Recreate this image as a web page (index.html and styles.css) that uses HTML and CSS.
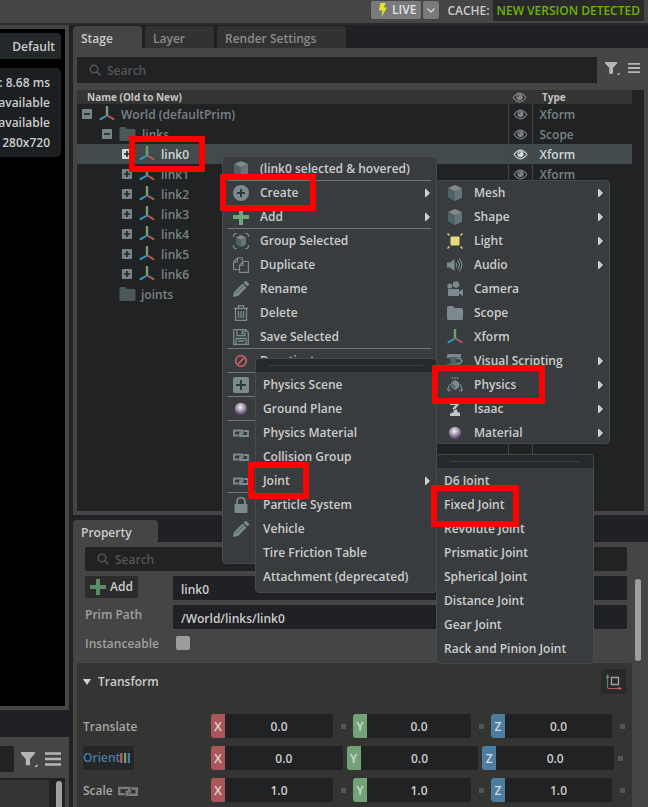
FILE: index.html
```
<!DOCTYPE html>
<html lang="en">
<head>
    <meta charset="UTF-8">
    <meta name="viewport" content="width=device-width, initial-scale=1.0">
    <title>Stage</title>
    <link rel="stylesheet" href="styles.css">
</head>
<body>
    <!-- Icon set -->
    <svg class="sprite" aria-hidden="true">
        <defs>
            <radialGradient id="ballFill" cx="45%" cy="35%" r="60%">
                <stop offset="0" stop-color="#f4f0f6"/>
                <stop offset="0.45" stop-color="#b3a8b8"/>
                <stop offset="1" stop-color="#59406e"/>
            </radialGradient>
        </defs>
        <symbol id="cube" viewBox="0 0 16 16">
            <path d="M8 0l7 3-7 3.500L1 3z" fill="#808b8e"/>
            <path d="M1 3l7 3.500V16l-7-3.500z" fill="#4d6267"/>
            <path d="M15 3L8 6.500V16l7-3.500z" fill="#66777b"/>
        </symbol>
        <symbol id="circle-plus" viewBox="0 0 16 16">
            <circle cx="8" cy="8" r="8" fill="#7b8a8e"/>
            <path d="M7 4h2v3h3v2H9v3H7V9H4V7h3z" fill="#34383a"/>
        </symbol>
        <symbol id="plus" viewBox="0 0 16 16">
            <path d="M6 0h4v6h6v4h-6v6H6v-6H0V6h6z" fill="currentColor"/>
        </symbol>
        <symbol id="group" viewBox="0 0 16 16">
            <path d="M.5 4V2L2 .5h2M12 .5h2L15.500 2v2M15.500 12v2L14 15.500h-2M4 15.500H2L.5 14v-2" fill="none" stroke="#7b8a8e" stroke-width="1.200"/>
            <path d="M8 2l5 2.300L8 7 3 4.300z" fill="#808b8e"/>
            <path d="M3 4.300L8 7v7l-5-2.500z" fill="#4d6267"/>
            <path d="M13 4.300L8 7v7l5-2.500z" fill="#66777b"/>
        </symbol>
        <symbol id="duplicate" viewBox="0 0 16 16">
            <path d="M6 12.500H.6V5L4.500 1h4.800v3M4.500 1v4H.6M6.500 8.500l3.500-4h5.400v10.800H6.500zM10 4.500v4H6.500" fill="none" stroke="#7b8a8e" stroke-width="1.200"/>
        </symbol>
        <symbol id="pencil" viewBox="0 0 16 16">
            <path d="M0 16l1-5 8.500-8.500 4 4L5 15zM10.500 1.500L12 0l1.500.3L15.800 2.500 16 4l-1.500 1.500z" fill="#7b8a8e"/>
            <path d="M3 12.500l7.500-7.500" stroke="#4d5a5d"/>
        </symbol>
        <symbol id="trash" viewBox="0 0 16 16">
            <path d="M1 3.500h14M5.500 3V.7h5V3M2.500 4v11.300h11V4M5.500 6v7M8 6v7M10.500 6v7" fill="none" stroke="#7b8a8e" stroke-width="1.300"/>
        </symbol>
        <symbol id="save" viewBox="0 0 16 16">
            <path d="M.7.7h12l2.600 2.600v12H.7zM4 .7v6h8v-6M3 15.300V9.500h10v5.800M5 12h6" fill="none" stroke="#7b8a8e" stroke-width="1.300"/>
            <path d="M8.500 1.500h2v4h-2z" fill="#7b8a8e"/>
        </symbol>
        <symbol id="ban" viewBox="0 0 16 16">
            <circle cx="8" cy="8" r="5.300" fill="none" stroke="#c9605e" stroke-width="1.700"/>
            <path d="M4.500 11.500l7-7" stroke="#c9605e" stroke-width="1.700"/>
        </symbol>
        <symbol id="square-plus" viewBox="0 0 16 16">
            <rect width="16" height="16" rx="2" fill="#7b8a8e"/>
            <path d="M7 3h2v4h4v2H9v4H7V9H3V7h4z" fill="#34383a"/>
        </symbol>
        <symbol id="ball" viewBox="0 0 16 16">
            <circle cx="8" cy="8" r="6.200" fill="url(#ballFill)"/>
        </symbol>
        <symbol id="link" viewBox="0 0 16 16">
            <path d="M5.500 10.500H1v-5h8v2.500M10.500 6H15v5H7V8.500h3.500" fill="none" stroke="currentColor" stroke-width="1.900"/>
        </symbol>
        <symbol id="lock" viewBox="0 0 16 16">
            <path d="M4 8V4.500a4 4 0 0 1 8 0V8" fill="none" stroke="#7b8a8e" stroke-width="1.800"/>
            <rect x="1.500" y="7" width="13" height="9" rx="1" fill="#7b8a8e"/>
        </symbol>
        <symbol id="light" viewBox="0 0 16 16">
            <rect x="3.500" y="3.500" width="9" height="9" rx="1" fill="#e3dc7c"/>
            <path d="M.5.500l2 2M15.500.500l-2 2M.5 15.500l2-2M15.500 15.500l-2-2" stroke="#e3dc7c" stroke-width="1.200"/>
        </symbol>
        <symbol id="audio" viewBox="0 0 16 16">
            <path d="M0 5.500h3L7.500 2v12L3 10.500H0z" fill="#7b8a8e"/>
            <path d="M9 6q1.500 2 0 4M10.500 3.500q4 4.500 0 9M12 1.500q6 6.500 0 13" fill="none" stroke="#7b8a8e" stroke-width="1.100"/>
        </symbol>
        <symbol id="camera" viewBox="0 0 16 16">
            <circle cx="2.800" cy="5" r="2.500" fill="#7b8a8e"/>
            <circle cx="9" cy="3.500" r="3.200" fill="#7b8a8e"/>
            <path d="M1 8h11v2.500L16 8v7l-4-2.500V15H1z" fill="#7b8a8e"/>
        </symbol>
        <symbol id="folder" viewBox="0 0 16 16">
            <path d="M0 2.500Q0 1 1.500 1H6l1.500 2h7Q16 3 16 4.500v9Q16 15 14.500 15h-13Q0 15 0 13.500z" fill="currentColor"/>
        </symbol>
        <symbol id="axes" viewBox="0 0 16 16">
            <path d="M8 8.500V1" stroke="#70a078" stroke-width="2.400" stroke-linecap="round"/>
            <path d="M8 9.500L1.500 13.200" stroke="#2f9dc0" stroke-width="2" stroke-linecap="round"/>
            <path d="M8.500 9.500l6 3.700" stroke="#ad5a5c" stroke-width="2" stroke-linecap="round"/>
        </symbol>
        <symbol id="script" viewBox="0 0 16 16">
            <path d="M0 5V2.500Q0 1 1.500 1H14v3.500H2V5z" fill="#7b8a8e"/>
            <path d="M2 4.500h9l-2 3.500 2 3.500H2L4 8z" fill="#4d6267"/>
            <path d="M0 11.500h11.500V13q0 1.500-1.500 1.500H1.500Q0 14.500 0 13z" fill="#7b8a8e"/>
            <path d="M10 5.500h3l2 2.500-2 2.500h-3" fill="none" stroke="#7b8a8e" stroke-width="1.700"/>
        </symbol>
        <symbol id="physics" viewBox="0 0 16 16">
            <path d="M5.500 0v2M8 0v2M10.500 0v2M3.500 7L1.500 10v4M12.500 7l2 3v4M0 11.500l1.500 2.500L4 13M12 13l2.500 1 1.500-2.500" fill="none" stroke="#728286" stroke-width="1.300"/>
            <path d="M8 3l4 2.500v5L8 13l-4-2.500v-5z" fill="#7b8a8e"/>
            <path d="M4 5.500L8 8v5l-4-2.500z" fill="#586b70"/>
        </symbol>
        <symbol id="robot" viewBox="0 0 16 16">
            <path d="M3 1h9v2.500L9 7l2 4.500h2V15H3v-2.500L7 11 5.500 7.500 8.500 4H3z" fill="#c4c6c6"/>
            <path d="M5.500 9.500L11 7" stroke="#383c3e" stroke-width="1"/>
        </symbol>
        <symbol id="eye" viewBox="0 0 16 12">
            <path d="M1 6q7-9.500 14 0q-7 9.500-14 0z" fill="none" stroke="currentColor" stroke-width="1.200"/>
            <circle cx="8" cy="5.500" r="3.400" fill="currentColor"/>
            <path d="M6.200 5.500q0-1.800 1.800-1.800" fill="none" stroke="#202223" stroke-width=".8"/>
        </symbol>
        <symbol id="expand" viewBox="0 0 10 10">
            <rect width="10" height="10" rx="1" fill="currentColor"/>
            <path d="M4.200 2h1.600v2.200H8v1.600H5.800V8H4.200V5.800H2V4.200h2.200z" fill="#202223"/>
        </symbol>
        <symbol id="collapse" viewBox="0 0 10 10">
            <rect width="10" height="10" rx="1" fill="currentColor"/>
            <path d="M2 4.200h6v1.600H2z" fill="#202223"/>
        </symbol>
        <symbol id="search" viewBox="0 0 12 12">
            <circle cx="5" cy="5" r="3.800" fill="none" stroke="currentColor" stroke-width="1.500"/>
            <path d="M7.800 7.800L11.300 11.300" stroke="currentColor" stroke-width="1.700"/>
        </symbol>
        <symbol id="filter" viewBox="0 0 16 16">
            <path d="M0 1h13v1.500L8.500 7.500v6h-4v-6L0 2.500zM15.500 12v3h-3z" fill="#b5b5b5"/>
        </symbol>
        <symbol id="bars" viewBox="0 0 16 16">
            <path d="M0 2.500h16M0 8h16M0 13.500h16" stroke="#b5b5b5" stroke-width="2.600"/>
        </symbol>
        <symbol id="arrow" viewBox="0 0 5 8">
            <path d="M0 0h1l4 4-4 4H0z" fill="#cfcfcf"/>
        </symbol>
    </svg>

    <header class="topbar">
        <button class="live"><svg width="8" height="14" viewBox="0 0 8 14"><path d="M1.500 0h5L5 4.500h3L2.500 14l1-6.500H0z" fill="#e6e22e"/></svg>LIVE</button>
        <button class="live-menu" aria-label="Live options"><svg width="8" height="5" viewBox="0 0 8 5"><path d="M.5.500L4 4 7.500.500" fill="none" stroke="#d8d8d8" stroke-width="1.300"/></svg></button>
        <span class="cache">CACHE:</span>
        <span class="cache-status">NEW VERSION DETECTED</span>
    </header>

    <main class="workspace">
        <section class="left">
            <div class="viewport">
                <button class="renderer">Default</button>
                <div class="stats">
                    <span>: 8.68 ms</span>
                    <span>available</span>
                    <span>available</span>
                    <span>280x720</span>
                </div>
            </div>
            <div class="content-browser">
                <div class="content-tools">
                    <div class="content-field"></div>
                    <button class="tool" aria-label="Filter content"><svg width="17" height="17"><use href="#filter"/></svg></button>
                    <button class="tool" aria-label="Content options"><svg width="16" height="16"><use href="#bars"/></svg></button>
                </div>
                <div class="content-list">
                    <div class="content-page"></div>
                    <div class="content-scroll"></div>
                </div>
            </div>
        </section>

        <div class="right">
            <nav class="tabs">
                <button class="tab-button active">Stage</button>
                <button class="tab-button">Layer</button>
                <button class="tab-button tab-wide">Render Settings</button>
            </nav>
            <section class="stage">
                <div class="stage-tools">
                    <label class="search">
                        <svg width="12" height="12"><use href="#search"/></svg>
                        <input type="text" placeholder="Search" aria-label="Search stage">
                    </label>
                    <button class="tool" aria-label="Filter stage"><svg width="15" height="15"><use href="#filter"/></svg></button>
                    <button class="tool" aria-label="Stage options"><svg width="12" height="12"><use href="#bars"/></svg></button>
                </div>
                <div class="tree-box">
                    <table class="tree">
                        <colgroup><col><col class="col-eye"><col class="col-type"></colgroup>
                        <thead>
                            <tr><th>Name (Old to New)</th><th class="eye"><svg width="15" height="11"><use href="#eye"/></svg></th><th class="type">Type</th></tr>
                        </thead>
                        <tbody>
                            <tr><td><div class="node level-0"><svg width="10" height="10"><use href="#collapse"/></svg><svg width="16" height="16"><use href="#axes"/></svg>World (defaultPrim)</div></td><td class="eye"><svg width="15" height="11"><use href="#eye"/></svg></td><td class="type">Xform</td></tr>
                            <tr><td><div class="node level-1"><svg width="10" height="10"><use href="#collapse"/></svg><svg class="folder" width="17" height="16"><use href="#folder"/></svg>links</div></td><td class="eye"><svg width="15" height="11"><use href="#eye"/></svg></td><td class="type">Scope</td></tr>
                            <tr class="selected"><td><div class="node level-2"><svg width="10" height="10"><use href="#expand"/></svg><svg width="16" height="16"><use href="#axes"/></svg>link0</div></td><td class="eye"><svg width="15" height="11"><use href="#eye"/></svg></td><td class="type">Xform</td></tr>
                            <tr><td><div class="node level-2"><svg width="10" height="10"><use href="#expand"/></svg><svg width="16" height="16"><use href="#axes"/></svg>link1</div></td><td class="eye"><svg width="15" height="11"><use href="#eye"/></svg></td><td class="type">Xform</td></tr>
                            <tr><td><div class="node level-2"><svg width="10" height="10"><use href="#expand"/></svg><svg width="16" height="16"><use href="#axes"/></svg>link2</div></td><td></td><td></td></tr>
                            <tr><td><div class="node level-2"><svg width="10" height="10"><use href="#expand"/></svg><svg width="16" height="16"><use href="#axes"/></svg>link3</div></td><td></td><td></td></tr>
                            <tr><td><div class="node level-2"><svg width="10" height="10"><use href="#expand"/></svg><svg width="16" height="16"><use href="#axes"/></svg>link4</div></td><td></td><td></td></tr>
                            <tr><td><div class="node level-2"><svg width="10" height="10"><use href="#expand"/></svg><svg width="16" height="16"><use href="#axes"/></svg>link5</div></td><td></td><td></td></tr>
                            <tr><td><div class="node level-2"><svg width="10" height="10"><use href="#expand"/></svg><svg width="16" height="16"><use href="#axes"/></svg>link6</div></td><td></td><td></td></tr>
                            <tr><td><div class="node leaf"><svg class="folder" width="17" height="16"><use href="#folder"/></svg>joints</div></td><td></td><td></td></tr>
                            <tr class="filler"><td></td><td></td><td></td></tr>
                        </tbody>
                    </table>
                </div>
            </section>

            <nav class="tabs property-tabs">
                <button class="tab-button active tab-property">Property</button>
            </nav>
            <section class="property">
                <div class="property-fields">
                    <label class="search property-search">
                        <svg width="12" height="12"><use href="#search"/></svg>
                        <input type="text" placeholder="Search" aria-label="Search properties">
                    </label>
                    <div class="field-row">
                        <button class="add-button"><svg width="16" height="16"><use href="#plus"/></svg>Add</button>
                        <input class="field" type="text" value="link0" aria-label="Prim name">
                    </div>
                    <div class="field-row">
                        <label for="primPath">Prim Path</label>
                        <input class="field" id="primPath" type="text" value="/World/links/link0">
                    </div>
                    <div class="field-row">
                        <label for="instanceable">Instanceable</label>
                        <input class="check" id="instanceable" type="checkbox">
                    </div>
                </div>
                <div class="property-scroll"></div>

                <div class="transform">
                    <div class="transform-head">
                        <button class="fold"><svg width="8" height="6" viewBox="0 0 8 6"><path d="M0 0h8L4 6z" fill="#d0d0d0"/></svg>Transform</button>
                        <button class="offset-button" aria-label="Toggle offset mode"><svg width="16" height="16" viewBox="0 0 16 16"><path d="M1.500 14V2M0 4l1.500-3L3 4" fill="none" stroke="#4f8a5c" stroke-width="1.200"/><path d="M1.500 14.500H15M12.500 13l2.500 1.500-2.500 1.500" fill="none" stroke="#b85a5a" stroke-width="1.200"/><path d="M5.500 3.500h7v7h-7z" fill="none" stroke="#a0a0a0" stroke-width="1.400"/></svg></button>
                    </div>
                    <div class="transform-row">
                        <span class="row-name">Translate</span>
                        <div class="axis-group">
                            <label class="axis x"><span>X</span><input type="text" value="0.0"></label>
                            <label class="axis y"><span>Y</span><input type="text" value="0.0"></label>
                            <label class="axis z"><span>Z</span><input type="text" value="0.0"></label>
                        </div>
                    </div>
                    <div class="transform-row">
                        <button class="orient">Orient<svg width="10" height="10" viewBox="0 0 10 10"><path d="M0 0h2.500v10H0z" fill="#ab5a5c"/><path d="M4 0h2.200v10H4z" fill="#6fa075"/><path d="M7.800 0H10v10H7.800z" fill="#4d7da0"/></svg></button>
                        <div class="axis-group tight">
                            <label class="axis x"><span>X</span><input type="text" value="0.0"></label>
                            <label class="axis y"><span>Y</span><input type="text" value="0.0"></label>
                            <label class="axis z"><span>Z</span><input type="text" value="0.0"></label>
                        </div>
                    </div>
                    <div class="transform-row">
                        <span class="row-name">Scale<svg width="20" height="20"><use href="#link"/></svg></span>
                        <div class="axis-group">
                            <label class="axis x"><span>X</span><input type="text" value="1.0"></label>
                            <label class="axis y"><span>Y</span><input type="text" value="1.0"></label>
                            <label class="axis z"><span>Z</span><input type="text" value="1.0"></label>
                        </div>
                    </div>
                </div>
            </section>
        </div>
    </main>

    <!-- Context menu of the selected prim -->
    <div class="menu menu-prim">
        <button class="ruled"><svg width="16" height="16"><use href="#cube"/></svg>(link0 selected &amp; hovered)</button>
        <button><svg width="16" height="16"><use href="#circle-plus"/></svg>Create<svg class="more" width="5" height="8"><use href="#arrow"/></svg></button>
        <button class="ruled"><svg class="green" width="16" height="16"><use href="#plus"/></svg>Add<svg class="more" width="5" height="8"><use href="#arrow"/></svg></button>
        <button><svg width="16" height="16"><use href="#group"/></svg>Group Selected</button>
        <button><svg width="16" height="16"><use href="#duplicate"/></svg>Duplicate</button>
        <button><svg width="16" height="16"><use href="#pencil"/></svg>Rename</button>
        <button><svg width="16" height="16"><use href="#trash"/></svg>Delete</button>
        <button class="ruled"><svg width="16" height="16"><use href="#save"/></svg>Save Selected</button>
        <button class="ruled"><svg width="16" height="16"><use href="#ban"/></svg>Deactivate</button>
        <button class="ruled" aria-label="Add item"><svg width="16" height="16"><use href="#square-plus"/></svg></button>
        <button class="ruled" aria-label="Material"><svg width="16" height="16"><use href="#ball"/></svg></button>
        <button aria-label="Copy link"><svg width="16" height="16"><use href="#link"/></svg></button>
        <button aria-label="Copy link"><svg width="16" height="16"><use href="#link"/></svg></button>
        <button class="ruled" aria-label="Copy link"><svg width="16" height="16"><use href="#link"/></svg></button>
        <button aria-label="Lock"><svg width="16" height="16"><use href="#lock"/></svg></button>
        <button aria-label="Edit"><svg width="16" height="16"><use href="#pencil"/></svg></button>
    </div>

    <div class="menu menu-create">
        <button><svg width="16" height="16"><use href="#cube"/></svg>Mesh<svg class="more" width="5" height="8"><use href="#arrow"/></svg></button>
        <button><svg width="16" height="16"><use href="#cube"/></svg>Shape<svg class="more" width="5" height="8"><use href="#arrow"/></svg></button>
        <button><svg width="16" height="16"><use href="#light"/></svg>Light<svg class="more" width="5" height="8"><use href="#arrow"/></svg></button>
        <button><svg width="16" height="16"><use href="#audio"/></svg>Audio<svg class="more" width="5" height="8"><use href="#arrow"/></svg></button>
        <button><svg width="16" height="16"><use href="#camera"/></svg>Camera</button>
        <button><svg width="16" height="16"><use href="#folder"/></svg>Scope</button>
        <button><svg width="16" height="16"><use href="#axes"/></svg>Xform</button>
        <button><svg width="16" height="16"><use href="#script"/></svg>Visual Scripting<svg class="more" width="5" height="8"><use href="#arrow"/></svg></button>
        <button><svg width="16" height="16"><use href="#physics"/></svg>Physics<svg class="more" width="5" height="8"><use href="#arrow"/></svg></button>
        <button><svg width="16" height="16"><use href="#robot"/></svg>Isaac<svg class="more" width="5" height="8"><use href="#arrow"/></svg></button>
        <button><svg width="16" height="16"><use href="#ball"/></svg>Material<svg class="more" width="5" height="8"><use href="#arrow"/></svg></button>
    </div>

    <div class="menu menu-physics">
        <div class="grip"></div>
        <button>Physics Scene</button>
        <button>Ground Plane</button>
        <button>Physics Material</button>
        <button>Collision Group</button>
        <button>Joint<svg class="more" width="5" height="8"><use href="#arrow"/></svg></button>
        <button>Particle System</button>
        <button>Vehicle</button>
        <button>Tire Friction Table</button>
        <button>Attachment (deprecated)</button>
    </div>

    <div class="menu menu-joint">
        <div class="grip"></div>
        <button>D6 Joint</button>
        <button>Fixed Joint</button>
        <button>Revolute Joint</button>
        <button>Prismatic Joint</button>
        <button>Spherical Joint</button>
        <button>Distance Joint</button>
        <button>Gear Joint</button>
        <button>Rack and Pinion Joint</button>
    </div>

    <!-- Red callouts -->
    <div class="callout callout-link"></div>
    <div class="callout callout-create"></div>
    <div class="callout callout-physics"></div>
    <div class="callout callout-joint"></div>
    <div class="callout callout-fixed"></div>
</body>
</html>
```
FILE: styles.css
```
* {
    box-sizing: border-box;
}
body {
    margin: 0;
    height: 100vh;
    display: flex;
    flex-direction: column;
    overflow: hidden;
    position: relative;
    background-color: #202124;
    color: #cccccc;
    font-family: "Open Sans", "Noto Sans", sans-serif;
    font-size: 12px;
    font-weight: 600;
    line-height: 20px;
}
button, input {
    margin: 0;
    padding: 0;
    border: none;
    background: none;
    color: inherit;
    font: inherit;
}
button {
    cursor: pointer;
    white-space: nowrap;
}
input {
    min-width: 0;
    outline: none;
}
svg {
    display: block;
    flex: none;
}
.sprite {
    position: absolute;
    width: 0;
    height: 0;
}

/* Top bar */
.topbar {
    flex: none;
    display: flex;
    justify-content: flex-end;
    align-items: flex-start;
    height: 25px;
    padding-right: 4px;
    background-color: #454545;
    border-bottom: 2px solid #2d2725;
}
.live {
    display: flex;
    align-items: center;
    gap: 5px;
    height: 18px;
    margin-top: 1px;
    padding: 0 5px 0 8px;
    background-color: #7a7a7a;
    border-radius: 2px;
    color: #e4e4e4;
}
.live-menu {
    display: flex;
    align-items: center;
    justify-content: center;
    width: 16px;
    height: 18px;
    margin: 1px 8px 0 2px;
    background-color: #7a7a7a;
    border-radius: 2px;
}
.cache-status {
    height: 21px;
    margin-left: 3px;
    padding: 0 4px;
    background-color: #292929;
    border-radius: 2px;
    color: #6fb500;
}
.cache, .cache-status {
    line-height: 21px;
}

.workspace {
    flex: 1;
    min-height: 0;
    display: flex;
    gap: 4px;
}

/* Viewport and content browser */
.left {
    width: 69px;
    flex: none;
    display: flex;
    flex-direction: column;
    gap: 27px;
}
.viewport {
    flex: 1;
    display: flex;
    flex-direction: column;
    align-items: flex-end;
    gap: 9px;
    padding: 4px 4px 0 0;
    background-color: #000000;
    border: solid #454545;
    border-width: 4px 4px 4px 0;
}
.renderer {
    width: 100%;
    height: 26px;
    padding: 2px 6px 0 0;
    background-color: #23282b;
    border-radius: 0 4px 0 0;
    text-align: right;
}
.stats {
    width: 100%;
    display: flex;
    flex-direction: column;
    align-items: flex-end;
    padding: 5px 11px 4px 0;
    background-color: #1b1f22;
    border-radius: 0 5px 5px 0;
    white-space: nowrap;
}
.content-browser {
    height: 70px;
    flex: none;
    display: flex;
    flex-direction: column;
    gap: 6px;
    padding: 9px 4px 0 0;
    background-color: #454545;
}
.content-tools {
    display: flex;
    align-items: center;
    gap: 7px;
    padding-right: 4px;
}
.content-field {
    flex: 1;
    height: 26px;
    background-color: #202224;
}
.content-list {
    flex: 1;
    display: flex;
    padding-top: 2px;
    background-color: #202224;
}
.content-page {
    width: 49px;
    background-color: #343434;
    border-radius: 0 2px 0 0;
}
.content-scroll {
    width: 6px;
    margin: 1px 0 0 7px;
    background-color: #a0a0a0;
    border-radius: 3px 3px 0 0;
}

/* Tabs */
.right {
    flex: 1;
    min-width: 0;
    display: flex;
    flex-direction: column;
}
.tabs {
    flex: none;
    display: flex;
    gap: 3px;
    padding-top: 1px;
}
.tab-button {
    width: 69px;
    height: 22px;
    padding: 3px 8px 0;
    background-color: #323232;
    border-radius: 4px 4px 0 0;
    color: #8a8a8a;
    line-height: 20px;
    text-align: left;
}
.tab-button.active {
    background-color: #454545;
    color: #cccccc;
}
.tab-wide {
    width: 129px;
}
.tab-property {
    width: 85px;
}
.property-tabs {
    padding-top: 5px;
}

/* Stage */
.stage {
    flex: none;
    height: 467px;
    display: flex;
    flex-direction: column;
    gap: 7px;
    padding: 9px 4px 4px;
    background-color: #454545;
}
.stage-tools {
    display: flex;
    align-items: center;
    gap: 8px;
    padding-right: 4px;
}
.stage-tools .tool {
    padding-bottom: 4px;
}
.search {
    flex: 1;
    display: flex;
    align-items: center;
    gap: 6px;
    height: 26px;
    padding-left: 12px;
    background-color: #202224;
    color: #555555;
}
.search input {
    flex: 1;
    padding-top: 2px;
}
.search input::placeholder {
    color: #555555;
    opacity: 1;
}
.tree-box {
    flex: 1;
    padding-right: 12px;
    background-color: #202224;
}
.tree {
    width: 100%;
    height: 100%;
    table-layout: fixed;
    border-collapse: collapse;
    color: #778485;
}
.tree th, .tree td {
    height: 20px;
    padding: 0;
    text-align: left;
    white-space: nowrap;
}
.tree th {
    height: 14px;
    padding-left: 10px;
    background-color: #343533;
    color: #c4c4c4;
    font-size: 10px;
    font-weight: 700;
    line-height: 14px;
}
.tree td + td {
    border-left: 1px solid #444444;
}
.tree .filler td {
    height: auto;
}
.col-eye {
    width: 24px;
}
.col-type {
    width: 100px;
}
.tree .eye {
    padding: 0 0 0 4px;
    vertical-align: middle;
}
.tree th.eye {
    color: #858585;
}
.tree td.type {
    padding: 2px 0 0 7px;
    line-height: 18px;
}
.tree .selected {
    background-color: #424a4b;
    color: #d0d8d8;
}
.node {
    display: flex;
    align-items: center;
    gap: 7px;
    height: 20px;
    padding-top: 2px;
    line-height: 18px;
}
.node svg {
    margin-bottom: 2px;
}
.node svg + svg {
    margin-right: -1px;
}
.level-0 {
    padding-left: 5px;
}
.level-1 {
    padding-left: 25px;
}
.level-2 {
    padding-left: 45px;
}
.leaf {
    padding-left: 42px;
    gap: 5px;
}
.folder {
    color: #4c575a;
}

/* Property */
.property {
    flex: 1;
    min-height: 0;
    display: grid;
    grid-template-columns: minmax(0, 1fr) 16px;
    grid-template-rows: 121px 1fr;
    padding-left: 4px;
    background-color: #454545;
}
.property-fields {
    display: flex;
    flex-direction: column;
    gap: 5px;
    padding: 5px 5px 0 8px;
}
.property-search {
    flex: none;
    height: 24px;
    border-radius: 2px;
}
.field-row {
    display: grid;
    grid-template-columns: 88px minmax(0, 1fr);
    align-items: start;
    height: 24px;
    color: #a0a0a0;
}
.add-button {
    display: flex;
    align-items: center;
    justify-self: start;
    gap: 4px;
    height: 22px;
    padding: 0 5px;
    background-color: #2c2c2c;
    border-radius: 2px;
    color: #cccccc;
}
.add-button svg, .green {
    color: #5d8b66;
}
.field {
    height: 24px;
    padding: 2px 8px 0;
    background-color: #202124;
    border-radius: 2px;
    color: #cccccc;
}
.check {
    appearance: none;
    width: 14px;
    height: 14px;
    margin: 2px 3px;
    background-color: #9c9c9c;
    border-radius: 2px;
}
.property-scroll {
    width: 6px;
    height: 82px;
    margin: 37px 0 0 3px;
    background-color: #a0a0a0;
    border-radius: 3px;
}
.transform {
    display: flex;
    flex-direction: column;
    gap: 8px;
    padding-left: 6px;
    background-color: #343533;
    border-radius: 2px 2px 0 0;
}
.transform-head {
    display: flex;
    align-items: flex-start;
    justify-content: space-between;
    height: 43px;
    padding: 6px 6px 0 0;
}
.fold {
    display: flex;
    align-items: center;
    gap: 7px;
    height: 25px;
}
.offset-button {
    display: flex;
    align-items: center;
    justify-content: center;
    width: 25px;
    height: 25px;
    background-color: #2a2a2a;
    border-radius: 2px;
}
.transform-row {
    display: grid;
    grid-template-columns: 128px minmax(0, 1fr);
    align-items: center;
    height: 24px;
    color: #a6a6a6;
}
.row-name {
    display: flex;
    align-items: center;
    gap: 5px;
    height: 22px;
    padding-top: 2px;
}
.row-name svg {
    color: #7c7c7c;
}
.orient {
    display: flex;
    align-items: center;
    justify-self: start;
    height: 24px;
    padding-right: 4px;
    background-color: #242628;
    border-radius: 2px;
    color: #4d7da0;
}
.axis-group {
    display: grid;
    grid-template-columns: minmax(0, 142fr) minmax(0, 138fr) minmax(0, 141fr);
}
.axis {
    display: flex;
    align-items: center;
    height: 24px;
}
.axis span {
    width: 14px;
    flex: none;
    height: 24px;
    border-radius: 3px 0 0 3px;
    color: #d8d8d8;
    line-height: 26px;
    text-align: center;
}
.axis.x span {
    background-color: #ab5658;
}
.axis.y span {
    background-color: #71a376;
}
.axis.z span {
    background-color: #4d7da0;
}
.axis input {
    flex: 1;
    height: 24px;
    background-color: #202224;
    border-radius: 0 2px 2px 0;
    color: #cccccc;
    text-align: center;
}
.axis::after {
    content: "";
    flex: none;
    width: 5px;
    height: 5px;
    margin: 0 7px 0 8px;
    background-color: #555555;
}
.tight {
    grid-template-columns: repeat(3, minmax(0, 1fr)) 5px;
    align-items: center;
    gap: 4px;
    padding-right: 9px;
}
.tight .axis::after {
    display: none;
}
.tight::after {
    content: "";
    height: 5px;
    background-color: #555555;
}

/* Menus */
.menu {
    position: absolute;
    display: flex;
    flex-direction: column;
    background-color: #383c3e;
    border: 1px solid #484a4a;
    border-radius: 4px;
}
.menu button {
    position: relative;
    display: flex;
    flex: none;
    align-items: center;
    gap: 11px;
    height: 24px;
    padding: 0 6px 0 10px;
    color: #cccccc;
    text-align: left;
}
.menu svg {
    color: #7b8a8e;
}
.menu .green {
    color: #71a376;
}
.menu .more {
    margin-left: auto;
}
.menu .ruled::after {
    content: "";
    position: absolute;
    left: 5px;
    right: 5px;
    bottom: 0;
    height: 1px;
    background-color: #747676;
}
.menu-prim {
    left: 222px;
    top: 156px;
    width: 215px;
    height: 408px;
}
.menu-create {
    left: 436px;
    top: 180px;
    width: 174px;
    height: 264px;
}
.menu-physics {
    left: 255px;
    top: 358px;
    width: 182px;
    padding-bottom: 4px;
}
.menu-joint {
    left: 436px;
    top: 454px;
    width: 158px;
    padding-bottom: 3px;
}
.menu-physics button, .menu-joint button {
    padding-top: 2px;
    padding-left: 7px;
}
.grip {
    height: 13px;
    padding: 6px 13px;
    background-color: #24292b;
    border-radius: 3px 3px 0 0;
}
.grip::before {
    content: "";
    display: block;
    height: 1px;
    background-color: #3a3f41;
}

/* Callouts */
.callout {
    position: absolute;
    border: 6px solid #ff0000;
    pointer-events: none;
}
.callout-link {
    left: 129px;
    top: 136px;
    width: 76px;
    height: 36px;
}
.callout-create {
    left: 220px;
    top: 174px;
    width: 96px;
    height: 37px;
}
.callout-physics {
    left: 432px;
    top: 365px;
    width: 113px;
    height: 39px;
}
.callout-joint {
    left: 248px;
    top: 462px;
    width: 61px;
    height: 37px;
}
.callout-fixed {
    left: 431px;
    top: 485px;
    width: 88px;
    height: 42px;
}
```
